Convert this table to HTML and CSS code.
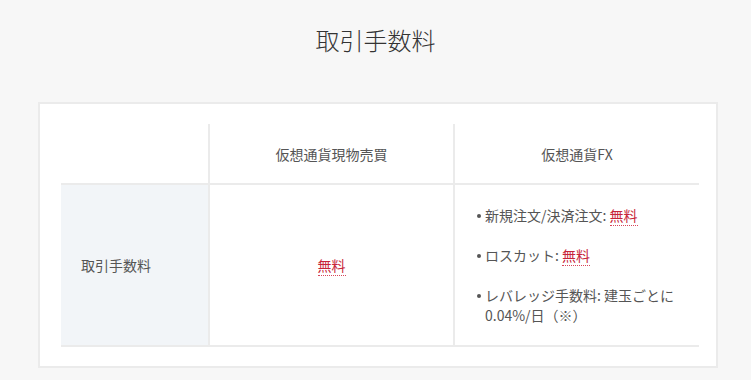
FILE: index.html
```html
<!DOCTYPE html>
<html lang="ja">
<head>
    <meta charset="UTF-8">
    <meta name="viewport" content="width=device-width, initial-scale=1.0">
    <title>取引手数料</title>
    <link rel="stylesheet" href="styles.css">
</head>
<body>
    <section class="fee-section">
        <h2 class="section-title">取引手数料</h2>
        <div class="fee-card">
            <table class="fee-table">
                <colgroup>
                    <col class="col-label">
                    <col class="col-spot">
                    <col class="col-fx">
                </colgroup>
                <thead>
                    <tr>
                        <th></th>
                        <th>仮想通貨現物売買</th>
                        <th>仮想通貨FX</th>
                    </tr>
                </thead>
                <tbody>
                    <tr>
                        <th class="row-label">取引手数料</th>
                        <td class="center"><span class="free">無料</span></td>
                        <td>
                            <ul class="fee-list">
                                <li>新規注文/決済注文: <span class="free">無料</span></li>
                                <li>ロスカット: <span class="free">無料</span></li>
                                <li>レバレッジ手数料: 建玉ごとに<br>0.04%/日（※）</li>
                            </ul>
                        </td>
                    </tr>
                </tbody>
            </table>
        </div>
    </section>
</body>
</html>
```

FILE: styles.css
```css
body {
    margin: 0;
    font-family: 'Noto Sans CJK JP', 'Noto Sans', sans-serif;
    background-color: #f7f7f7;
    color: #555;
}
.fee-section {
    padding: 22px 0 14px;
}
.section-title {
    margin: 0 0 44px;
    text-align: center;
    font-size: 24px;
    font-weight: 300;
    line-height: 36px;
    color: #333;
}
.fee-card {
    margin: 0 33px 0 38px;
    padding: 20px 20px 19px 21px;
    background-color: #fff;
    border: 2px solid #ebebeb;
}
.fee-table {
    width: 638px;
    border-collapse: collapse;
    table-layout: fixed;
    font-size: 14px;
    line-height: 20px;
}
.col-label { width: 148px; }
.col-spot { width: 245px; }
.col-fx { width: 245px; }
.fee-table th,
.fee-table td {
    font-weight: normal;
    vertical-align: middle;
    padding: 0 20px;
}
.fee-table thead th {
    height: 59px;
    text-align: center;
    border-bottom: 2px solid #ebebeb;
}
.fee-table thead th + th,
.fee-table tbody td {
    border-left: 2px solid #ebebeb;
}
.fee-table tbody tr {
    height: 162px;
    border-bottom: 2px solid #ebebeb;
}
.row-label {
    text-align: left;
    background-color: #f2f5f8;
}
.center { text-align: center; }
.free {
    color: #c7243a;
    border-bottom: 1px dotted #d7465a;
}
.fee-list {
    margin: 0;
    padding: 0;
    list-style: none;
}
.fee-list li {
    position: relative;
    padding-left: 10px;
    margin-bottom: 20px;
}
.fee-list li:last-child { margin-bottom: 0; }
.fee-list li::before {
    content: "";
    position: absolute;
    left: 2px;
    top: 9px;
    width: 4px;
    height: 4px;
    border-radius: 50%;
    background-color: #555;
}
```
